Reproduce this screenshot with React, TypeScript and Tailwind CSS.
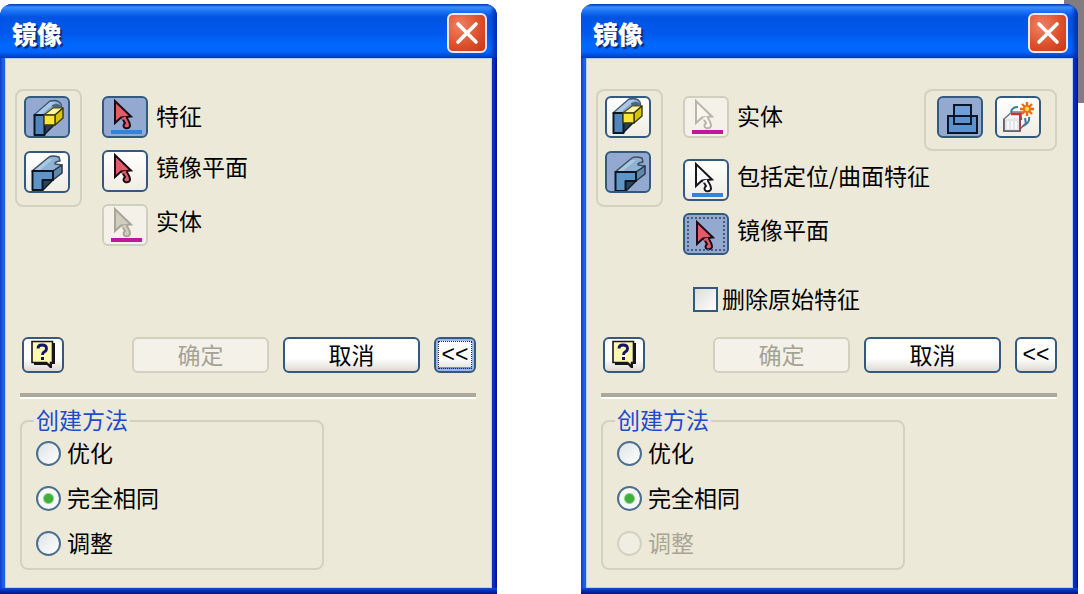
import React, { useState } from 'react';
import clsx from 'clsx';

type ButtonState = 'normal' | 'pressed' | 'disabled';
type CursorTone = 'red' | 'white' | 'grey' | 'ghost';

const CURSOR_TONES: Record<CursorTone, { fill: string; stroke: string }> = {
  red: { fill: '#e05c68', stroke: '#1c0a14' },
  white: { fill: '#ffffff', stroke: '#16161c' },
  grey: { fill: '#cfccc0', stroke: '#a9a698' },
  ghost: { fill: '#f8f6ee', stroke: '#b9b6a8' },
};

const METHODS = ['优化', '完全相同', '调整'];

/* ---------- Icons (drawn on the 42x38 inner face of a tool button) ---------- */

const CursorIcon = ({ tone, bar, low }: { tone: CursorTone; bar?: string; low?: boolean }) => {
  const { fill, stroke } = CURSOR_TONES[tone];
  return (
    <svg viewBox="0 0 42 38" className="h-full w-full" aria-hidden="true">
      {bar && <rect x="7" y="32" width="31" height="4" fill={bar} />}
      <g transform={low ? 'translate(1 6)' : 'translate(0 2)'} stroke={stroke} strokeLinejoin="miter">
        <path d="M18 18 L21 23 Q18 26 21 28 Q25 29 26 26 Q26 22 22 17 Z" fill={fill} strokeWidth="2" />
        <path d="M11 1 V23 L17 17.5 L27 16.5 Z" fill={fill} strokeWidth="2" />
        <path d="M18 19 L22 17.5" stroke={fill} strokeWidth="2.4" />
      </g>
    </svg>
  );
};

const FeatureIcon = ({ pressed }: { pressed?: boolean }) => (
  <svg viewBox="0 0 42 38" className="h-full w-full" aria-hidden="true">
    <g transform={pressed ? undefined : 'translate(-2 -2)'} strokeLinejoin="round">
      <path d="M17 26 H29 L18 37 H17 Z" fill="#263f5e" stroke="#101820" strokeWidth="1.4" />
      <path d="M8 17 L24 3 Q32 1 35 6 L36 12 L28 12 L18 17 Z" fill="#85a9d0" stroke="#40566f" strokeWidth="1.4" />
      <path d="M24 4 L30 4 L15 17 H9 Z" fill="#a9c8e6" />
      <path d="M26 7 Q31 5 34 7 L36 11 H27 Z" fill="#4c6680" />
      <rect x="8.5" y="17" width="10" height="20" fill="#4f86bb" stroke="#0c1622" strokeWidth="2" />
      <path d="M18 17 L27 10 H37 L29 17 Z" fill="#fff8a0" stroke="#5a5010" strokeWidth="1.2" />
      <path d="M29 17 L37 10 V20 L29 27 Z" fill="#d8c400" stroke="#3c3808" strokeWidth="1.4" />
      <rect x="18" y="17" width="11" height="10" fill="#f8e438" stroke="#3c3808" strokeWidth="1.4" />
    </g>
  </svg>
);

const SolidIcon = ({ pressed }: { pressed?: boolean }) => (
  <svg viewBox="0 0 42 38" className="h-full w-full" aria-hidden="true">
    <g transform={pressed ? 'translate(2 1)' : undefined} strokeLinejoin="round">
      <path d="M16 27 H27 L17 37 H16 Z" fill="#28435f" stroke="#101820" strokeWidth="1.4" />
      <path d="M6 18 L23 4 Q26 2 33 4 L34 8 Q28 9 29 11 L36 12 L27 18 Z" fill="#8fb2d4" stroke="#3c5064" strokeWidth="1.5" />
      <path d="M22 6 L27 6 L14 17 H9 Z" fill="#acc9e4" />
      <path d="M27 18 L36 12 V20 L27 27 Z" fill="#5f88ac" stroke="#27394c" strokeWidth="1.5" />
      <path d="M6.5 18 H27 V27 H16.5 V37 H6.5 Z" fill="#5e95c6" stroke="#0c1622" strokeWidth="2" />
    </g>
  </svg>
);

const JoinIcon = () => (
  <svg viewBox="0 0 42 38" className="h-full w-full" aria-hidden="true">
    <rect x="15" y="7" width="17" height="19" fill="#6f9fd8" />
    <rect x="9" y="18" width="29" height="17" fill="#5c92d0" />
    <g fill="none" stroke="#0c1626" strokeWidth="2">
      <rect x="15" y="7" width="17" height="19" />
      <rect x="9" y="18" width="29" height="17" />
    </g>
  </svg>
);

const NewSolidIcon = () => (
  <svg viewBox="0 0 42 38" className="h-full w-full" aria-hidden="true">
    <path d="M7 21 L15 14 H25 L23 19 V33 H7 Z" fill="#f8f8fa" stroke="#77777f" strokeWidth="1.6" />
    <path d="M7 21 V33 H23 V20" fill="#e4e4ea" stroke="#55555d" strokeWidth="1.6" />
    <path d="M11 23 V31 M15 23 V31 M19 23 V31" stroke="#f8f8fa" strokeWidth="2" />
    <path d="M14 16 H23 L24 22" fill="none" stroke="#d42c3c" strokeWidth="2.6" />
    <path d="M23 18 L23 31 L29 25" fill="none" stroke="#a04050" strokeWidth="1.4" />
    <path d="M14 14 Q15 9 21 9 M26 28 Q33 25 32 19 M29 26 L28 20" fill="none" stroke="#3c7c9c" strokeWidth="2" />
    <path
      d="M30 4 V8 M30 14 V18 M23 11 H27 M33 11 H37 M25 6 L28 9 M32 13 L35 16 M35 6 L32 9 M28 13 L25 16"
      stroke="#ee6c10"
      strokeWidth="2.4"
    />
    <circle cx="30" cy="11" r="3" fill="#ffd860" stroke="#ee6c10" strokeWidth="1.5" />
  </svg>
);

const HelpIcon = () => (
  <svg viewBox="0 0 26 28" className="h-7 w-6.5" aria-hidden="true">
    <path d="M4 3 H25 V24 H22 V28 H20 L17 25 H4 Z" fill="#16161c" />
    <path d="M2 1.5 H22.5 V22.5 H20.5 V26 L16.5 22.5 H2 Z" fill="#fbf8b4" stroke="#16161c" strokeWidth="1.6" />
    <path d="M8 8.5 Q8 5 12 5 Q16.5 5 16.5 8.5 Q16.5 11 14 12 Q12.5 13 12.5 15" fill="none" stroke="#141468" strokeWidth="2.8" />
    <rect x="11" y="17" width="3" height="3" fill="#141468" />
  </svg>
);

const CloseIcon = () => (
  <svg viewBox="0 0 36 36" className="h-full w-full" aria-hidden="true">
    <path d="M9 9 L27 27 M27 9 L9 27" stroke="#fff" strokeWidth="3.6" strokeLinecap="round" />
  </svg>
);

/* ---------- Controls ---------- */

interface ToolButtonProps {
  id?: string;
  label?: string;
  state?: ButtonState;
  focused?: boolean;
  children: React.ReactNode;
}

const ToolButton: React.FC<ToolButtonProps> = ({ id, label, state = 'normal', focused, children }) => (
  <button
    id={id}
    type="button"
    aria-label={label}
    aria-pressed={state === 'pressed'}
    disabled={state === 'disabled'}
    className={clsx(
      'relative h-[42px] w-[46px] shrink-0 overflow-hidden rounded-md border-2',
      state === 'normal' && 'border-[#33597f] bg-linear-to-b from-white to-[#efede4]',
      state === 'pressed' && 'border-[#33597f] bg-[#93a9d0]',
      state === 'disabled' && 'border-[#d0cebf] bg-[#f4f2e8]'
    )}
  >
    {children}
    {focused && <span className="absolute inset-0.5 border-2 border-dotted border-[#4b5a78]" />}
  </button>
);

interface ToolRowProps extends ToolButtonProps {
  id: string;
  text: string;
  lead?: boolean; // first row of the panel, caption centred on its button
}

const ToolRow: React.FC<ToolRowProps> = ({ text, lead, ...button }) => (
  <div className={clsx('flex gap-2', lead ? 'items-center' : 'items-start')}>
    <ToolButton {...button} />
    <label htmlFor={button.id} className={clsx('leading-8', lead && 'pb-1')}>{text}</label>
  </div>
);

const PushButton = ({ children, disabled, focused, label, wide }: {
  children: React.ReactNode;
  disabled?: boolean;
  focused?: boolean;
  label?: string;
  wide?: boolean;
}) => (
  <button
    type="button"
    disabled={disabled}
    aria-label={label}
    className={clsx(
      'relative flex h-9 shrink-0 items-center justify-center rounded-md border-2 pb-0.5 leading-7',
      wide ? 'w-[137px]' : "w-[42px] font-['Liberation_Sans',sans-serif]",
      disabled
        ? 'border-[#d2d0c0] bg-[#f4f2e8] text-[#a5a295]'
        : 'border-[#33597f] bg-linear-to-b from-white from-60% to-[#dedbd2]',
      focused && 'shadow-[inset_0_0_0_2px_#9db8e8,inset_0_-4px_0_#6f90d8]'
    )}
  >
    {children}
    {focused && <span className="absolute inset-0.5 border border-dotted border-[#202858]" />}
  </button>
);

const MethodGroup = ({ name, disabled = [] }: { name: string; disabled?: string[] }) => {
  const [method, setMethod] = useState('完全相同');

  return (
    <fieldset className="mt-2.5 w-2/3 rounded-lg border-2 border-[#d3d1c0] px-3.5 pt-2 pb-3">
      <legend className="-ml-0.5 px-0.5 pb-1 leading-5 text-[#1c4bce]">创建方法</legend>
      <div className="flex flex-col gap-5">
        {METHODS.map(m => {
          const off = disabled.includes(m);
          return (
            <label key={m} className={clsx('flex h-[25px] items-center gap-1.5', off && 'text-[#a9a698]')}>
              <input
                type="radio"
                name={name}
                checked={method === m}
                disabled={off}
                onChange={() => setMethod(m)}
                className="size-[25px] shrink-0 appearance-none rounded-full border-2 border-[#4a6f8f] bg-linear-to-br from-[#dfe3e4] to-white checked:bg-[radial-gradient(circle,#3fae3a_0_4px,#8fd08a_5px,#f6f8f6_6px)] disabled:border-[#d3d1c0] disabled:from-[#f0eee2] disabled:to-[#f0eee2]"
              />
              <span className="pb-0.5">{m}</span>
            </label>
          );
        })}
      </div>
    </fieldset>
  );
};

interface MirrorDialogProps {
  name: string;
  children: React.ReactNode;
  collapseFocused?: boolean;
  disabledMethods?: string[];
}

const MirrorDialog: React.FC<MirrorDialogProps> = ({ name, children, collapseFocused, disabledMethods }) => (
  <section className="relative overflow-hidden rounded-t-xl bg-[#0831c4]">
    <header className="flex h-[54px] items-center justify-between bg-[linear-gradient(#0a45c4_0,#3d95ff_3px,#1d74f6_7px,#0054e3_13px,#0058ea_28px,#0068ff_42px,#0064fa_48px,#0040c4_54px)] pt-1 pr-2.5 pl-3 shadow-[inset_-4px_0_4px_#0030b0]">
      <h1 className="text-[25px] leading-8 font-black text-white [text-shadow:2px_2px_1px_#0a2a80]">镜像</h1>
      <button
        type="button"
        aria-label="关闭"
        className="size-10 rounded-md border-2 border-[#f0e8f4] bg-[radial-gradient(circle_at_30%_30%,#ee8264,#dc4d28_60%,#c23a14)]"
      >
        <CloseIcon />
      </button>
    </header>

    {/* Window frame: light-to-dark blue edges around the client area */}
    <div className="bg-[linear-gradient(90deg,#0a3cd0_0,#1c62e8_3px,#1c62e8_50%,#0a2cc4_50%,#0a2cc4_calc(100%-3px),#00108c)] px-[5px]">
      <div className="border border-[#b4d0f8] bg-[#ece9d8] pt-[30px] pr-[15px] pb-[17px] pl-[9px]">
        <div className="flex min-h-[248px] items-start">{children}</div>

        <div className="pl-[5px]">
          <div className="flex items-center pl-0.5">
            <PushButton label="帮助"><HelpIcon /></PushButton>
            <div className="ml-auto flex gap-3.5">
              <PushButton wide disabled>确定</PushButton>
              <PushButton wide>取消</PushButton>
              <PushButton label="收起" focused={collapseFocused}>&lt;&lt;</PushButton>
            </div>
          </div>
          <hr className="mt-5 h-1.5 border-0 border-b-2 border-b-white bg-[#aca899]" />
          <MethodGroup name={name} disabled={disabledMethods} />
        </div>
      </div>
    </div>
    <div className="h-1.5 bg-linear-to-b from-[#1448d8] to-[#001090]" />
  </section>
);

const ModeBox = ({ mode }: { mode: 'feature' | 'solid' }) => (
  <div className="mr-5 flex flex-col gap-[13px] rounded-lg border-2 border-[#d3d1c0] pt-[5px] pr-2.5 pb-3 pl-[7px]">
    <ToolButton label="镜像各个特征" state={mode === 'feature' ? 'pressed' : 'normal'}>
      <FeatureIcon pressed={mode === 'feature'} />
    </ToolButton>
    <ToolButton label="镜像整个实体" state={mode === 'solid' ? 'pressed' : 'normal'}>
      <SolidIcon pressed={mode === 'solid'} />
    </ToolButton>
  </div>
);

export default function App() {
  return (
    <main className="relative min-h-screen bg-white font-['Noto_Sans_CJK_SC','Liberation_Sans',sans-serif] text-[23px] text-black">
      <div className="absolute top-0 right-0 h-[103px] w-5 bg-[#807c80]" />
      <div className="relative grid grid-cols-2 gap-[84px] pt-1 pr-1.5">
        <MirrorDialog name="method-feature" collapseFocused>
          <ModeBox mode="feature" />
          <div className="flex flex-col gap-3 pt-[7px]">
            <ToolRow id="a-features" text="特征" lead state="pressed">
              <CursorIcon tone="red" bar="#2f84dc" />
            </ToolRow>
            <ToolRow id="a-plane" text="镜像平面">
              <CursorIcon tone="red" />
            </ToolRow>
            <ToolRow id="a-solid" text="实体" state="disabled">
              <CursorIcon tone="grey" bar="#c0189c" />
            </ToolRow>
          </div>
        </MirrorDialog>

        <MirrorDialog name="method-solid" disabledMethods={['调整']}>
          <ModeBox mode="solid" />
          <div className="min-w-0 flex-1">
            <div className="flex items-start justify-between">
              <div className="pt-[7px]">
                <ToolRow id="b-solid" text="实体" lead state="disabled">
                  <CursorIcon tone="ghost" bar="#c0189c" />
                </ToolRow>
              </div>
              <div className="flex gap-3 rounded-lg border-2 border-[#d3d1c0] pt-[5px] pr-3.5 pb-[11px] pl-[11px]">
                <ToolButton label="求并" state="pressed"><JoinIcon /></ToolButton>
                <ToolButton label="新建实体"><NewSolidIcon /></ToolButton>
              </div>
            </div>
            <div className="mt-2 flex flex-col gap-3">
              <ToolRow id="b-work" text="包括定位/曲面特征">
                <CursorIcon tone="white" bar="#2f84dc" />
              </ToolRow>
              <ToolRow id="b-plane" text="镜像平面" state="pressed" focused>
                <CursorIcon tone="red" low />
              </ToolRow>
            </div>
            <label className="mt-8 ml-2.5 flex h-[25px] items-center gap-1">
              <input
                type="checkbox"
                className="size-[25px] shrink-0 appearance-none border-2 border-[#33597f] bg-linear-to-br from-[#dcdcd7] to-white checked:bg-[#3fae3a]"
              />
              <span className="pb-0.5">删除原始特征</span>
            </label>
          </div>
        </MirrorDialog>
      </div>
    </main>
  );
}
